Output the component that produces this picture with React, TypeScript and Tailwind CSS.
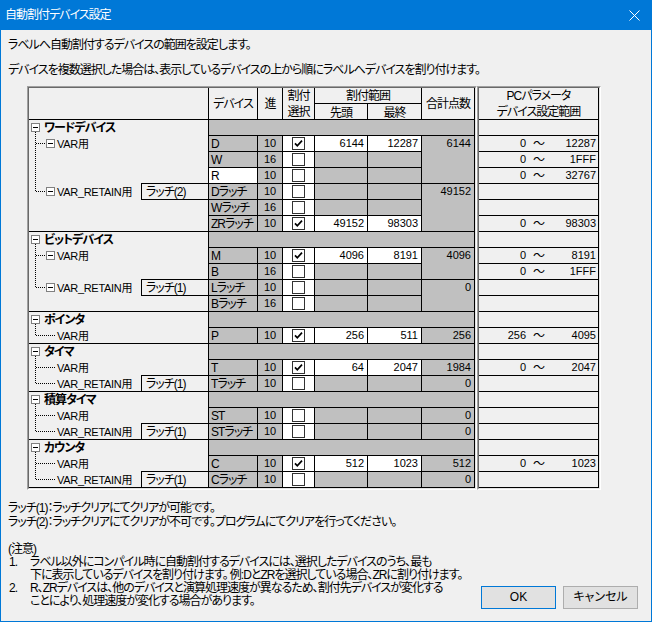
import React from "react";
import clsx from "clsx";

type Row = {
  dev: string;
  base: string;
  checked?: boolean;
  start?: string;
  end?: string;
  white?: boolean;
  pc?: [string, string];
  focus?: boolean;
};

type Sub = {
  label: string;
  node?: boolean;
  latch?: string;
  total: string;
  rows: Row[];
};

type Group = { name: string; subs: Sub[] };

const groups: Group[] = [
  {
    name: "ワードデバイス",
    subs: [
      {
        label: "VAR用",
        node: true,
        total: "6144",
        rows: [
          { dev: "D", base: "10", checked: true, start: "6144", end: "12287", pc: ["0", "12287"], focus: true },
          { dev: "W", base: "16", pc: ["0", "1FFF"] },
          { dev: "R", base: "10", white: true, pc: ["0", "32767"] },
        ],
      },
      {
        label: "VAR_RETAIN用",
        node: true,
        latch: "ラッチ(2)",
        total: "49152",
        rows: [
          { dev: "Dラッチ", base: "10" },
          { dev: "Wラッチ", base: "16" },
          { dev: "ZRラッチ", base: "10", checked: true, start: "49152", end: "98303", pc: ["0", "98303"] },
        ],
      },
    ],
  },
  {
    name: "ビットデバイス",
    subs: [
      {
        label: "VAR用",
        node: true,
        total: "4096",
        rows: [
          { dev: "M", base: "10", checked: true, start: "4096", end: "8191", pc: ["0", "8191"] },
          { dev: "B", base: "16", pc: ["0", "1FFF"] },
        ],
      },
      {
        label: "VAR_RETAIN用",
        node: true,
        latch: "ラッチ(1)",
        total: "0",
        rows: [
          { dev: "Lラッチ", base: "10" },
          { dev: "Bラッチ", base: "16" },
        ],
      },
    ],
  },
  {
    name: "ポインタ",
    subs: [
      {
        label: "VAR用",
        total: "256",
        rows: [{ dev: "P", base: "10", checked: true, start: "256", end: "511", pc: ["256", "4095"] }],
      },
    ],
  },
  {
    name: "タイマ",
    subs: [
      {
        label: "VAR用",
        total: "1984",
        rows: [{ dev: "T", base: "10", checked: true, start: "64", end: "2047", pc: ["0", "2047"] }],
      },
      { label: "VAR_RETAIN用", latch: "ラッチ(1)", total: "0", rows: [{ dev: "Tラッチ", base: "10" }] },
    ],
  },
  {
    name: "積算タイマ",
    subs: [
      { label: "VAR用", total: "0", rows: [{ dev: "ST", base: "10" }] },
      { label: "VAR_RETAIN用", latch: "ラッチ(1)", total: "0", rows: [{ dev: "STラッチ", base: "10" }] },
    ],
  },
  {
    name: "カウンタ",
    subs: [
      {
        label: "VAR用",
        total: "512",
        rows: [{ dev: "C", base: "10", checked: true, start: "512", end: "1023", pc: ["0", "1023"] }],
      },
      { label: "VAR_RETAIN用", latch: "ラッチ(1)", total: "0", rows: [{ dev: "Cラッチ", base: "10" }] },
    ],
  },
];

const dot = { stroke: "#000", strokeDasharray: "1 1" };

function Box({ x }: { x: number }) {
  return (
    <g>
      <rect x={x + 0.5} y={3.5} width={8} height={8} fill="#fff" stroke="#808080" />
      <line x1={x + 2} y1={7.5} x2={x + 7} y2={7.5} stroke="#000" />
    </g>
  );
}

function Check({ on }: { on?: boolean }) {
  return (
    <svg width="13" height="13" viewBox="0 0 13 13">
      <rect x="0.5" y="0.5" width="12" height="12" fill="#fff" stroke="#333" />
      {on && <path d="M3 6.3 5.3 8.8 10 3.6" fill="none" stroke="#000" strokeWidth="1.7" />}
    </svg>
  );
}

function Tree({ g }: { g: Group }) {
  const total = 1 + g.subs.reduce((n, s) => n + s.rows.length, 0);
  let idx = 1;
  const childIdx = g.subs.map((s) => {
    const i = idx;
    idx += s.rows.length;
    return i;
  });
  const lastChild = childIdx[childIdx.length - 1];
  const rows: React.ReactNode[] = [];
  for (let i = 1; i < total; i++) {
    const si = childIdx.indexOf(i);
    const sub = si >= 0 ? g.subs[si] : null;
    rows.push(
      <div key={i} className={clsx("flex items-start", i === total - 1 ? "h-[15px]" : "h-[16px]")}>
        <svg width="28" height="16" className="shrink-0" shapeRendering="crispEdges">
          {i < lastChild && <line x1="6.5" y1="0" x2="6.5" y2="16" {...dot} />}
          {i === lastChild && <line x1="6.5" y1="0" x2="6.5" y2="8" {...dot} />}
          {sub && <line x1="7" y1="7.5" x2={sub.node ? 17 : 26} y2="7.5" {...dot} />}
          {sub?.node && <Box x={17} />}
        </svg>
        {sub && <span className="text-[11px] leading-[16px] tracking-[-0.3px] whitespace-nowrap">{sub.label}</span>}
        {sub?.latch && (
          <div className="ml-auto -mt-px h-[17px] w-[67px] border-l border-y border-black pl-[4px] flex items-center whitespace-nowrap">
            {sub.latch}
          </div>
        )}
      </div>
    );
  }
  return (
    <div className="w-[180px] shrink-0 border-r border-b border-black flex flex-col">
      <div className="h-[16px] flex items-start">
        <svg width="13" height="16" className="shrink-0" shapeRendering="crispEdges">
          <Box x={2} />
          <line x1="6.5" y1="12" x2="6.5" y2="16" {...dot} />
        </svg>
        <span className="ml-[2px] font-bold leading-[16px] whitespace-nowrap">{g.name}</span>
      </div>
      {rows}
    </div>
  );
}

function DataRow({ r }: { r: Row }) {
  const fill = r.checked ? "bg-white" : "bg-[#c0c0c0]";
  return (
    <div className="h-[16px] flex border-b border-black">
      <div
        className={clsx(
          "w-[49px] border-r border-black pl-[2px] flex items-center whitespace-nowrap overflow-hidden",
          r.white ? "bg-white" : "bg-[#c0c0c0]"
        )}
      >
        {r.dev}
      </div>
      <div className="w-[25px] border-r border-black bg-[#c0c0c0] flex items-center justify-center text-[11px] tracking-normal">
        {r.base}
      </div>
      <div className="relative w-[32px] border-r border-black bg-white flex items-center justify-center">
        <Check on={r.checked} />
        {r.focus && (
          <div className="absolute -left-px -top-px -right-px -bottom-px border border-dotted border-black" />
        )}
      </div>
      <div className={clsx("w-[53px] border-r border-black flex items-center justify-end pr-[3px] text-[11px] tracking-normal", fill)}>
        {r.start}
      </div>
      <div className={clsx("w-[54px] border-r border-black flex items-center justify-end pr-[3px] text-[11px] tracking-normal", fill)}>
        {r.end}
      </div>
    </div>
  );
}

function Frame({ children }: { children: React.ReactNode }) {
  return (
    <div className="border border-t-[#a0a0a0] border-l-[#a0a0a0] border-r-white border-b-white">
      <div className="border border-t-[#696969] border-l-[#696969] border-r-[#e3e3e3] border-b-[#e3e3e3]">
        {children}
      </div>
    </div>
  );
}

function LeftTable() {
  return (
    <div className="w-[446px] bg-[#f0f0f0]">
      <div className="flex h-[32px]">
        <div className="w-[180px] border-r border-b border-black" />
        <div className="w-[49px] border-r border-b border-black flex items-center justify-center">デバイス</div>
        <div className="w-[25px] border-r border-b border-black flex items-center justify-center">進</div>
        <div className="w-[32px] border-r border-b border-black flex flex-col items-center justify-center leading-[16px]">
          <span>割付</span>
          <span>選択</span>
        </div>
        <div className="w-[107px] border-b border-black flex flex-col">
          <div className="h-[16px] border-r border-b border-black flex items-center justify-center">割付範囲</div>
          <div className="flex flex-1">
            <div className="w-[53px] border-r border-black flex items-center justify-center">先頭</div>
            <div className="w-[54px] border-r border-black flex items-center justify-center">最終</div>
          </div>
        </div>
        <div className="w-[53px] border-r border-b border-black flex items-center justify-center">合計点数</div>
      </div>
      {groups.map((g) => (
        <div key={g.name} className="flex">
          <Tree g={g} />
          <div className="w-[266px] flex flex-col">
            <div className="h-[16px] border-r border-b border-black bg-[#c0c0c0]" />
            {g.subs.map((s, i) => (
              <div key={i} className="flex">
                <div className="w-[213px] flex flex-col">
                  {s.rows.map((r) => (
                    <DataRow key={r.dev} r={r} />
                  ))}
                </div>
                <div className="w-[53px] border-r border-b border-black bg-[#c0c0c0] text-right pr-[3px] text-[11px] leading-[15px] tracking-normal">
                  {s.total}
                </div>
              </div>
            ))}
          </div>
        </div>
      ))}
    </div>
  );
}

function RightTable() {
  const rows: (Row | null)[] = [];
  groups.forEach((g) => {
    rows.push(null);
    g.subs.forEach((s) => s.rows.forEach((r) => rows.push(r)));
  });
  return (
    <div className="w-[120px] bg-[#f0f0f0]">
      <div className="h-[32px] border-r border-b border-black flex flex-col items-center justify-center leading-[16px]">
        <span>PCパラメータ</span>
        <span>デバイス設定範囲</span>
      </div>
      {rows.map((r, i) => (
        <div key={i} className="h-[16px] border-r border-b border-black flex items-center text-[11px] tracking-normal">
          {r?.pc && (
            <>
              <span className="w-[47px] text-right">{r.pc[0]}</span>
              <span className="ml-[7px] text-[12px]">〜</span>
              <span className="flex-1 text-right pr-[2px]">{r.pc[1]}</span>
            </>
          )}
        </div>
      ))}
    </div>
  );
}

export default function App() {
  return (
    <div className="w-[652px] h-[622px] bg-[#0078d7] flex flex-col px-px pb-px font-['Liberation_Sans','Noto_Sans_CJK_JP',sans-serif] text-[12px] tracking-[-1px] text-black [font-feature-settings:'palt']">
      <div className="h-[30px] shrink-0 flex items-center justify-between pl-[4px] pr-[11px] text-white">
        <span className="leading-[16px]">自動割付デバイス設定</span>
        <svg width="11" height="11" viewBox="0 0 11 11">
          <path d="M0.5 0.5 10.5 10.5 M10.5 0.5 0.5 10.5" stroke="#fff" strokeWidth="1" />
        </svg>
      </div>
      <div className="flex-1 bg-[#f0f0f0] flex flex-col">
        <p className="mt-[8px] pl-[7px] leading-[14px]">ラベルへ自動割付するデバイスの範囲を設定します。</p>
        <p className="mt-[11px] pl-[7px] leading-[14px] whitespace-nowrap">
          デバイスを複数選択した場合は、表示しているデバイスの上から順にラベルへデバイスを割り付けます。
        </p>
        <div className="flex ml-[26px] mt-[9px]">
          <Frame>
            <LeftTable />
          </Frame>
          <Frame>
            <RightTable />
          </Frame>
        </div>
        <div className="flex items-end justify-between whitespace-nowrap">
          <div className="pl-[7px] mt-[11px]">
            <p className="leading-[14px]">ラッチ(1)：ラッチクリアにてクリアが可能です。</p>
            <p className="leading-[14px]">ラッチ(2)：ラッチクリアにてクリアが不可です。プログラムにてクリアを行ってください。</p>
            <p className="mt-[14px] leading-[13px]">(注意)</p>
            <div className="flex leading-[13px]">
              <span className="w-[22px] pl-[1px] shrink-0">1.</span>
              <div>
                <p>ラベル以外にコンパイル時に自動割付するデバイスには、選択したデバイスのうち、最も</p>
                <p>下に表示しているデバイスを割り付けます。 例:DとZRを選択している場合、ZRに割り付けます。</p>
              </div>
            </div>
            <div className="flex leading-[13px]">
              <span className="w-[22px] pl-[1px] shrink-0">2.</span>
              <div>
                <p>R、ZRデバイスは、他のデバイスと演算処理速度が異なるため、割付先デバイスが変化する</p>
                <p>ことにより、処理速度が変化する場合があります。</p>
              </div>
            </div>
          </div>
          <div className="flex gap-[7px] mr-[13px] -mb-px tracking-normal">
            <button className="w-[75px] h-[23px] bg-[#e1e1e1] border border-[#0078d7] leading-[21px]">OK</button>
            <button className="w-[75px] h-[23px] bg-[#e1e1e1] border border-[#adadad] leading-[21px]">キャンセル</button>
          </div>
        </div>
      </div>
    </div>
  );
}
